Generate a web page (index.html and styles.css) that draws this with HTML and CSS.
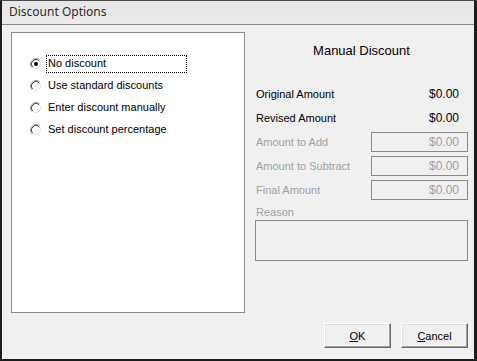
FILE: index.html
```html
<!DOCTYPE html>
<html>
<head>
<meta charset="utf-8">
<link rel="stylesheet" href="styles.css">
</head>
<body>
<div class="window">
  <div class="titlebar">Discount Options</div>
  <div class="client">
    <div class="main">
      <div class="options">
        <div class="radio-row">
          <svg class="radio" width="12" height="12" viewBox="0 0 12 12">
            <circle cx="6" cy="6" r="5.5" fill="#fff"/>
            <path d="M9.89 2.11 A5.5 5.5 0 0 0 2.11 9.89" fill="none" stroke="#a0a0a0" stroke-width="1"/>
            <path d="M2.11 9.89 A5.5 5.5 0 0 0 9.89 2.11" fill="none" stroke="#ffffff" stroke-width="1"/>
            <path d="M9.18 2.82 A4.5 4.5 0 0 0 2.82 9.18" fill="none" stroke="#404040" stroke-width="1"/>
            <path d="M2.82 9.18 A4.5 4.5 0 0 0 9.18 2.82" fill="none" stroke="#e3e3e3" stroke-width="1"/>
            <circle cx="6" cy="6" r="2" fill="#000"/>
          </svg>
          <span class="label focused">No discount</span>
        </div>
        <div class="radio-row">
          <svg class="radio" width="12" height="12" viewBox="0 0 12 12">
            <circle cx="6" cy="6" r="5.5" fill="#fff"/>
            <path d="M9.89 2.11 A5.5 5.5 0 0 0 2.11 9.89" fill="none" stroke="#a0a0a0" stroke-width="1"/>
            <path d="M2.11 9.89 A5.5 5.5 0 0 0 9.89 2.11" fill="none" stroke="#ffffff" stroke-width="1"/>
            <path d="M9.18 2.82 A4.5 4.5 0 0 0 2.82 9.18" fill="none" stroke="#404040" stroke-width="1"/>
            <path d="M2.82 9.18 A4.5 4.5 0 0 0 9.18 2.82" fill="none" stroke="#e3e3e3" stroke-width="1"/>
          </svg>
          <span class="label">Use standard discounts</span>
        </div>
        <div class="radio-row">
          <svg class="radio" width="12" height="12" viewBox="0 0 12 12">
            <circle cx="6" cy="6" r="5.5" fill="#fff"/>
            <path d="M9.89 2.11 A5.5 5.5 0 0 0 2.11 9.89" fill="none" stroke="#a0a0a0" stroke-width="1"/>
            <path d="M2.11 9.89 A5.5 5.5 0 0 0 9.89 2.11" fill="none" stroke="#ffffff" stroke-width="1"/>
            <path d="M9.18 2.82 A4.5 4.5 0 0 0 2.82 9.18" fill="none" stroke="#404040" stroke-width="1"/>
            <path d="M2.82 9.18 A4.5 4.5 0 0 0 9.18 2.82" fill="none" stroke="#e3e3e3" stroke-width="1"/>
          </svg>
          <span class="label">Enter discount manually</span>
        </div>
        <div class="radio-row">
          <svg class="radio" width="12" height="12" viewBox="0 0 12 12">
            <circle cx="6" cy="6" r="5.5" fill="#fff"/>
            <path d="M9.89 2.11 A5.5 5.5 0 0 0 2.11 9.89" fill="none" stroke="#a0a0a0" stroke-width="1"/>
            <path d="M2.11 9.89 A5.5 5.5 0 0 0 9.89 2.11" fill="none" stroke="#ffffff" stroke-width="1"/>
            <path d="M9.18 2.82 A4.5 4.5 0 0 0 2.82 9.18" fill="none" stroke="#404040" stroke-width="1"/>
            <path d="M2.82 9.18 A4.5 4.5 0 0 0 9.18 2.82" fill="none" stroke="#e3e3e3" stroke-width="1"/>
          </svg>
          <span class="label">Set discount percentage</span>
        </div>
      </div>
      <div class="manual">
        <div class="heading">Manual Discount</div>
        <div class="rows">
          <div class="row"><span class="name">Original Amount</span><span class="value">$0.00</span></div>
          <div class="row"><span class="name">Revised Amount</span><span class="value">$0.00</span></div>
          <div class="row disabled"><span class="name">Amount to Add</span><span class="box">$0.00</span></div>
          <div class="row disabled"><span class="name">Amount to Subtract</span><span class="box">$0.00</span></div>
          <div class="row disabled"><span class="name">Final Amount</span><span class="box">$0.00</span></div>
        </div>
        <div class="reason-label">Reason</div>
        <div class="reason-box"></div>
      </div>
    </div>
    <div class="buttons">
      <button class="btn"><u>O</u>K</button>
      <button class="btn"><u>C</u>ancel</button>
    </div>
  </div>
</div>
</body>
</html>
```

FILE: styles.css
```css
* { box-sizing: border-box; }
html, body { margin: 0; padding: 0; }
body {
  width: 477px;
  height: 361px;
  overflow: hidden;
  background: #f0f0f0;
  font-family: "Liberation Sans", Arial, sans-serif;
  font-size: 11px;
  color: #000;
}
.window {
  width: 477px;
  height: 361px;
  border-top: 1px solid #4a4a4a;
  border-left: 2px solid #1c1c1c;
  border-right: 3px solid #1c1c1c;
  border-bottom: 2px solid #1c1c1c;
  display: flex;
  flex-direction: column;
  background: #f0f0f0;
}
.titlebar {
  height: 24px;
  flex: none;
  background: linear-gradient(#e6e6e6, #ececec);
  border-bottom: 1px solid #8a8a8a;
  padding-left: 7px;
  font-family: "Noto Sans", "Open Sans", sans-serif;
  font-size: 12px;
  line-height: 22px;
  color: #2b2b2b;
}
.client {
  flex: 1;
  padding: 7px 0 0 9px;
  box-shadow: inset 1px 0 #ffffff;
}
.main {
  display: flex;
  gap: 10px;
}
.options {
  width: 234px;
  height: 281px;
  background: #fff;
  border: 1px solid #8a8a8a;
  padding: 22px 0 0 18px;
  display: flex;
  flex-direction: column;
  gap: 4px;
}
.radio-row {
  display: flex;
  align-items: center;
  height: 18px;
  gap: 4px;
}
.radio { flex: none; display: block; }
.label {
  display: block;
  width: 141px;
  height: 18px;
  line-height: 15px;
  padding-left: 1px;
  border: 1px dotted transparent;
  white-space: nowrap;
}
.label.focused { border-color: #000; }
.manual {
  width: 213px;
  display: flex;
  flex-direction: column;
}
.heading {
  margin-top: 11px;
  height: 16px;
  line-height: 16px;
  text-align: center;
  font-size: 13px;
}
.rows {
  margin-top: 25px;
  display: flex;
  flex-direction: column;
  gap: 4px;
}
.row {
  height: 20px;
  display: flex;
  align-items: center;
  justify-content: space-between;
}
.name { padding-left: 1px; }
.value { padding-right: 9px; font-size: 12px; }
.disabled { color: #a0a0a0; }
.box {
  width: 97px;
  height: 20px;
  border: 1px solid #8a8a8a;
  text-align: right;
  padding-right: 8px;
  line-height: 18px;
  font-size: 12px;
}
.reason-label {
  margin-top: 4px;
  height: 16px;
  line-height: 16px;
  padding-left: 1px;
  color: #a0a0a0;
}
.reason-box {
  margin-top: 0;
  height: 41px;
  border: 1px solid #8a8a8a;
}
.buttons {
  display: flex;
  justify-content: flex-end;
  gap: 10px;
  padding-right: 6px;
  margin-top: 10px;
}
.btn {
  width: 67px;
  height: 25px;
  font-family: "Liberation Sans", Arial, sans-serif;
  font-size: 11px;
  color: #000;
  background: #f0f0f0;
  border: 1px solid;
  border-color: #ffffff #696969 #696969 #ffffff;
  box-shadow: inset -1px -1px #a0a0a0, inset 1px 1px #e3e3e3;
  padding: 0;
}
```
